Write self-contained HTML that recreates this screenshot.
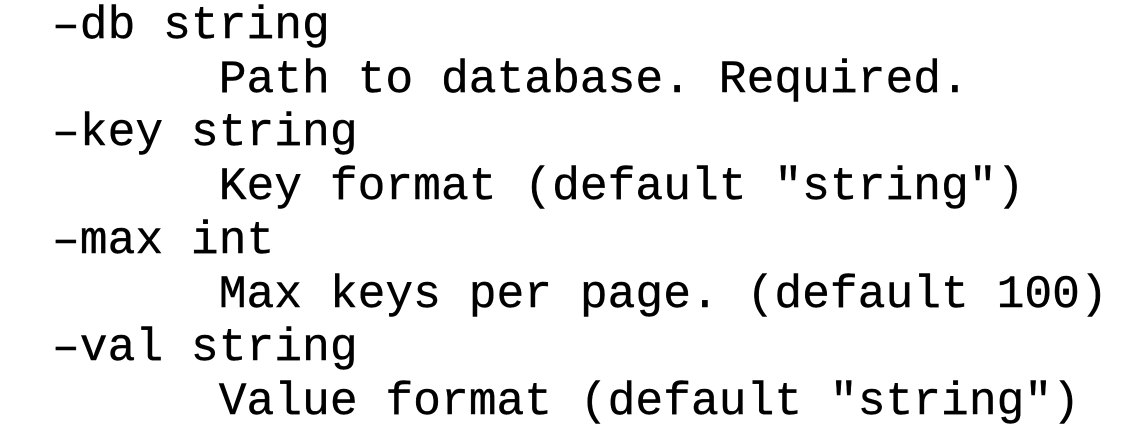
<!DOCTYPE html>
<html><head><style>
html,body{margin:0;padding:0;background:#fff;width:1148px;height:430px;overflow:hidden}
pre{position:absolute;left:52px;top:-1px;margin:0;font-family:"Liberation Mono",monospace;font-size:46.3px;line-height:53.7px;color:#000;letter-spacing:0;-webkit-text-stroke:0.4px #000}
</style></head><body>
<pre>–db string
      Path to database. Required.
–key string
      Key format (default "string")
–max int
      Max keys per page. (default 100)
–val string
      Value format (default "string")</pre>
</body></html>
